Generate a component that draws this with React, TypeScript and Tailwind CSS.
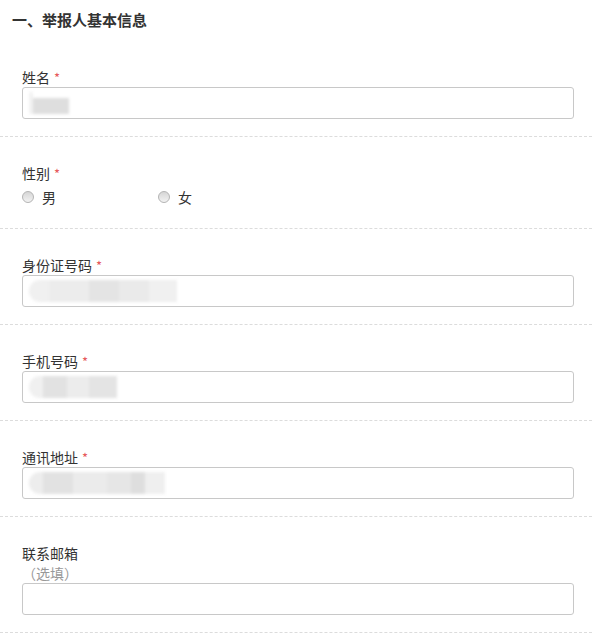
import type { ReactNode } from 'react';

const font = { fontFamily: '"Microsoft YaHei", "Noto Sans CJK SC", "Noto Sans", sans-serif' };

// mosaic placeholder for the redacted values
function Mosaic({ blocks }: { blocks: string[] }) {
  return (
    <div className="flex h-[22px] items-stretch blur-[1.5px]">
      {blocks.map((c, i) => (
        <div key={i} className={c} />
      ))}
    </div>
  );
}

function Label({ text, required }: { text: string; required?: boolean }) {
  return (
    <div className="h-5 text-[14px] leading-5 text-[#333]">
      {text}
      {required && <span className="ml-1 text-[13px] text-[#e6585a]">*</span>}
    </div>
  );
}

function Field({ children }: { children?: ReactNode }) {
  return (
    <div className="flex h-8 items-center rounded-[3px] border border-[#c8c8c8] bg-white px-[6px]">
      {children}
    </div>
  );
}

function Section({ children, radio }: { children: ReactNode; radio?: boolean }) {
  return (
    <div
      className={
        radio
          ? 'border-b border-dashed border-[#dcdcdc] pb-[21px] pl-[22px] pr-[18px] pt-[26px]'
          : 'border-b border-dashed border-[#dcdcdc] pb-[17px] pl-[22px] pr-[18px] pt-[26px]'
      }
    >
      {children}
    </div>
  );
}

function Radio({ text }: { text: string }) {
  return (
    <label className="flex w-[136px] items-center gap-[8px] text-[14px] leading-5 text-[#333]">
      <span className="h-[12px] w-[12px] rounded-full border border-[#b4b4b4] bg-gradient-to-b from-[#d6d6d6] to-[#f2f2f2]" />
      {text}
    </label>
  );
}

export default function App() {
  return (
    <div className="min-h-screen bg-white" style={font}>
      <div className="px-3 pb-[11px] pt-[10px] text-[15px] font-bold leading-5 text-[#333]">一、举报人基本信息</div>

      <Section>
        <Label text="姓名" required />
        <Field>
          <Mosaic blocks={['w-[4px] bg-[#f2f2f2]', 'w-[36px] bg-[#dedede] mt-[6px]']} />
        </Field>
      </Section>

      <Section radio>
        <Label text="性别" required />
        <div className="mt-1 flex">
          <Radio text="男" />
          <Radio text="女" />
        </div>
      </Section>

      <Section>
        <Label text="身份证号码" required />
        <Field>
          <Mosaic
            blocks={[
              'w-[20px] bg-[#f0f0f0] rounded-l-full',
              'w-[40px] bg-[#ececec]',
              'w-[30px] bg-[#e4e4e4]',
              'w-[30px] bg-[#eaeaea]',
              'w-[28px] bg-[#f0f0f0]',
            ]}
          />
        </Field>
      </Section>

      <Section>
        <Label text="手机号码" required />
        <Field>
          <Mosaic
            blocks={[
              'w-[14px] bg-[#f0f0f0] rounded-l-full',
              'w-[24px] bg-[#e2e2e2]',
              'w-[22px] bg-[#ececec]',
              'w-[28px] bg-[#e4e4e4]',
            ]}
          />
        </Field>
      </Section>

      <Section>
        <Label text="通讯地址" required />
        <Field>
          <Mosaic
            blocks={[
              'w-[14px] bg-[#ededed] rounded-l-full',
              'w-[30px] bg-[#e2e2e2]',
              'w-[34px] bg-[#ebebeb]',
              'w-[24px] bg-[#e6e6e6]',
              'w-[14px] bg-[#dedede]',
              'w-[20px] bg-[#efefef]',
            ]}
          />
        </Field>
      </Section>

      <Section>
        <Label text="联系邮箱" />
        <div className="h-5 text-[14px] leading-5 text-[#999]">（选填）</div>
        <Field />
      </Section>
    </div>
  );
}
